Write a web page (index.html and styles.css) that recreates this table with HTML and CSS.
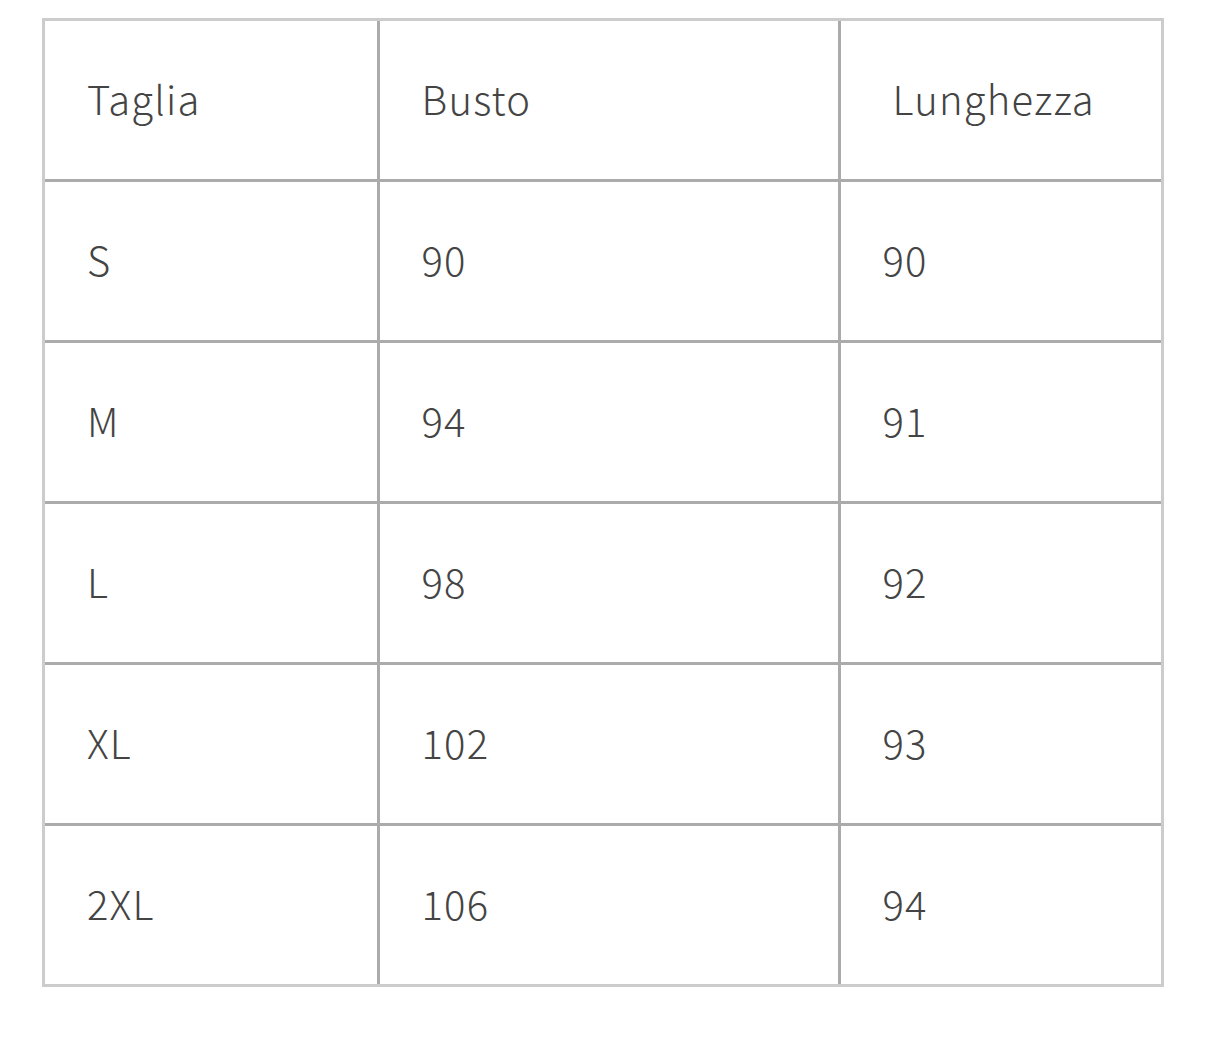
FILE: index.html
```html
<!DOCTYPE html>
<html lang="it">
<head>
<meta charset="utf-8">
<title>Tabella taglie</title>
<link rel="stylesheet" href="styles.css">
</head>
<body>
<div class="size-table-wrap">
  <table class="size-table">
    <colgroup>
      <col class="c1"><col class="c2"><col class="c3">
    </colgroup>
    <tbody>
      <tr><td>Taglia</td><td>Busto</td><td class="hd3">Lunghezza</td></tr>
      <tr><td>S</td><td>90</td><td>90</td></tr>
      <tr><td>M</td><td>94</td><td>91</td></tr>
      <tr><td>L</td><td>98</td><td>92</td></tr>
      <tr><td>XL</td><td>102</td><td>93</td></tr>
      <tr><td>2XL</td><td>106</td><td>94</td></tr>
    </tbody>
  </table>
</div>
</body>
</html>
```
FILE: styles.css
```css
html, body {
  margin: 0;
  background: #ffffff;
}
body {
  padding: 18px 42px;
  font-family: "Noto Sans CJK SC", "Noto Sans", sans-serif;
  color: #444444;
}
.size-table-wrap {
  border: 3px solid #cccccc;
}
.size-table {
  width: 100%;
  border-collapse: collapse;
  table-layout: fixed;
}
.size-table .c1 { width: 333px; }
.size-table .c2 { width: 461px; }
.size-table .c3 { width: auto; }
.size-table td {
  height: 153px;
  padding: 0 0 5px 42px;
  font-size: 40px;
  font-weight: 300;
  letter-spacing: 1.2px;
  line-height: 1;
  vertical-align: middle;
  border-right: 3px solid #ababab;
  border-bottom: 3px solid #ababab;
  box-sizing: content-box;
}
.size-table td:last-child { border-right: none; }
.size-table tr:last-child td { border-bottom: none; }
.size-table td.hd3 { padding-left: 52px; }
```
